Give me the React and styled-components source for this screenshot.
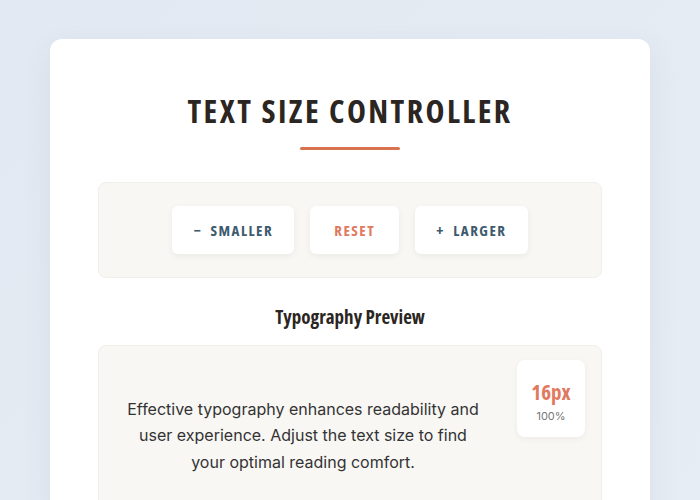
import React, { useState } from "react"
import styled, { createGlobalStyle } from "styled-components"

const GlobalStyle = createGlobalStyle`
  html, body {
    margin: 0;
    padding: 0;
    background: #e4ebf3;
    overflow: hidden;
  }
  body {
    font-family: Inter, "Noto Sans", sans-serif;
  }
`

const condensed = `"Open Sans", Roboto, sans-serif`

const Page = styled.div`
  min-height: 100vh;
  padding: 39px 0 40px;
  box-sizing: border-box;
  background: linear-gradient(135deg, #e2e9f2 0%, #e6edf4 100%);
`

const Card = styled.main`
  width: 600px;
  margin: 0 auto;
  background: #ffffff;
  border-radius: 12px;
  padding: 48px 48px 40px;
  box-sizing: border-box;
  box-shadow: 0 10px 30px rgba(60, 80, 110, 0.08);
`

const Title = styled.h1`
  margin: 0;
  text-align: center;
  font-family: ${condensed};
  font-stretch: 75%;
  font-weight: 700;
  font-size: 32px;
  line-height: 48px;
  letter-spacing: 2.4px;
  color: #2b2622;
  text-transform: uppercase;
`

const Underline = styled.div`
  width: 100px;
  height: 3px;
  border-radius: 2px;
  background: #d9734f;
  margin: 12px auto 32px;
`

const Controls = styled.div`
  display: flex;
  justify-content: center;
  gap: 16px;
  padding: 23px;
  background: #f8f7f4;
  border: 1px solid #f1efea;
  border-radius: 8px;
`

const Button = styled.button`
  height: 48px;
  padding: 0 ${({ $accent }) => ($accent ? "24px" : "21px")};
  border: none;
  border-radius: 6px;
  background: #ffffff;
  box-shadow: 0 2px 6px rgba(0, 0, 0, 0.06);
  font-family: ${condensed};
  font-stretch: 75%;
  font-weight: 700;
  font-size: 15px;
  letter-spacing: 1.5px;
  text-transform: uppercase;
  color: ${({ $accent }) => ($accent ? "#e07a5f" : "#3d5a6e")};
  cursor: pointer;
`

const Subtitle = styled.h2`
  margin: 27px 0 16px;
  text-align: center;
  font-family: ${condensed};
  font-stretch: 75%;
  font-weight: 700;
  font-size: 19px;
  line-height: 24px;
  color: #2b2622;
`

const Preview = styled.section`
  display: flex;
  align-items: flex-start;
  padding: 14px 16px 40px 24px;
  background: #f8f7f4;
  border: 1px solid #f1efea;
  border-radius: 8px;
`

const PreviewText = styled.p`
  width: 360px;
  margin: 36px 0 0;
  text-align: center;
  font-size: ${({ $size }) => $size}px;
  line-height: 1.65;
  color: #333333;
`

const Badge = styled.div`
  margin-left: auto;
  width: 68px;
  height: 77px;
  padding-top: 20px;
  box-sizing: border-box;
  display: flex;
  flex-direction: column;
  align-items: center;
  gap: 5px;
  background: #ffffff;
  border-radius: 8px;
  box-shadow: 0 2px 6px rgba(0, 0, 0, 0.05);
`

const BadgeSize = styled.span`
  font-family: ${condensed};
  font-stretch: 75%;
  font-weight: 700;
  font-size: 21px;
  line-height: 24px;
  color: #e07a5f;
`

const BadgePercent = styled.span`
  font-size: 11px;
  line-height: 14px;
  color: #777777;
`

export default function App() {
  const [size, setSize] = useState(16)

  return (
    <>
      <GlobalStyle />
      <Page>
        <Card>
          <Title>Text Size Controller</Title>
          <Underline />
          <Controls>
            <Button onClick={() => setSize(s => Math.max(10, s - 2))}>−&nbsp; Smaller</Button>
            <Button $accent onClick={() => setSize(16)}>Reset</Button>
            <Button onClick={() => setSize(s => Math.min(32, s + 2))}>+&nbsp; Larger</Button>
          </Controls>
          <Subtitle>Typography Preview</Subtitle>
          <Preview>
            <PreviewText $size={size}>
              Effective typography enhances readability and user experience. Adjust the text size to find your optimal reading comfort.
            </PreviewText>
            <Badge>
              <BadgeSize>{size}px</BadgeSize>
              <BadgePercent>{Math.round((size / 16) * 100)}%</BadgePercent>
            </Badge>
          </Preview>
        </Card>
      </Page>
    </>
  )
}
